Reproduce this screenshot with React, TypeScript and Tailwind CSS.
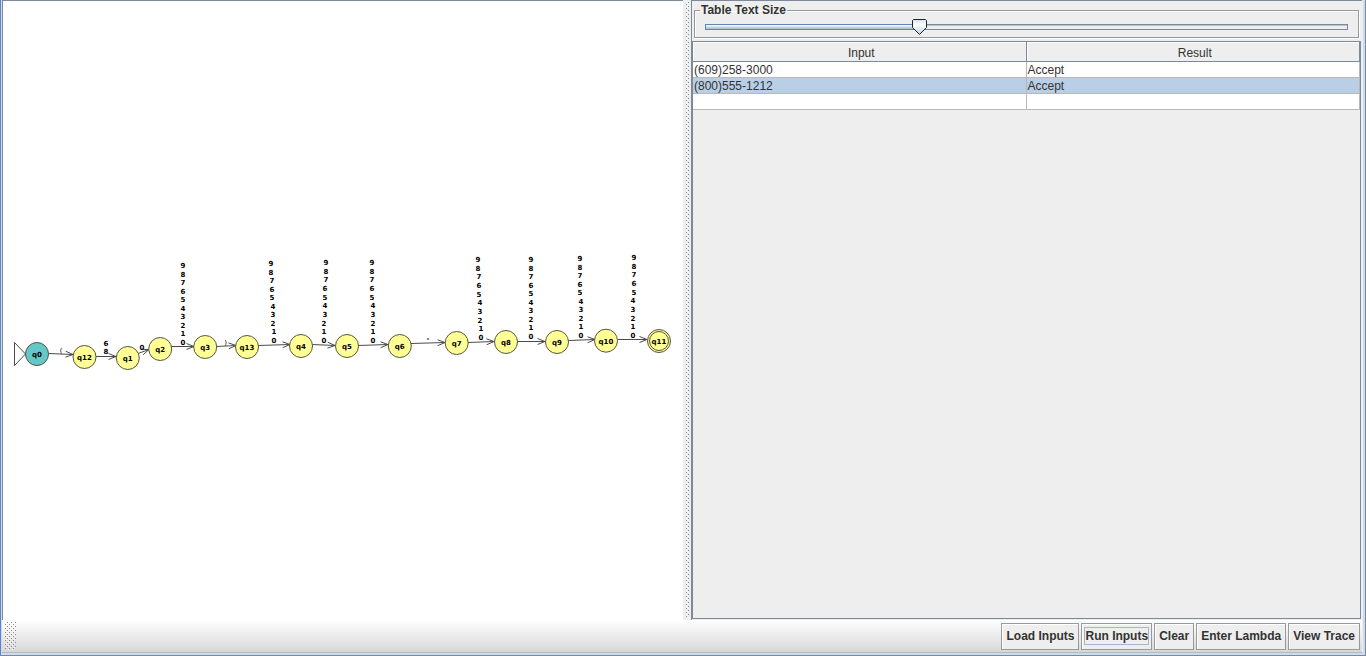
import { useState } from "react";

type State = { name: string; x: number; y: number; start?: boolean; final?: boolean };
type Edge = { x1: number; y1: number; x2: number; y2: number };
type Label = { text: string; x: number; y: number; light?: boolean };

const states: State[] = [
  { name: "q0", x: 35, y: 354, start: true },
  { name: "q12", x: 82.5, y: 357 },
  { name: "q1", x: 125.8, y: 358 },
  { name: "q2", x: 158.2, y: 349 },
  { name: "q3", x: 203.2, y: 347 },
  { name: "q13", x: 245, y: 347 },
  { name: "q4", x: 299, y: 346 },
  { name: "q5", x: 345, y: 346 },
  { name: "q6", x: 397.8, y: 346 },
  { name: "q7", x: 454.7, y: 343 },
  { name: "q8", x: 504, y: 342 },
  { name: "q9", x: 555, y: 342 },
  { name: "q10", x: 604, y: 340.7 },
  { name: "q11", x: 657, y: 341, final: true },
];

const edges: Edge[] = [
  { x1: 46, y1: 353.5, x2: 71, y2: 354.5 },
  { x1: 94, y1: 356.5, x2: 114, y2: 356.5 },
  { x1: 136, y1: 353.5, x2: 147, y2: 349.5 },
  { x1: 169, y1: 346.5, x2: 192, y2: 346.5 },
  { x1: 214, y1: 346.5, x2: 234, y2: 345.5 },
  { x1: 256, y1: 345.5, x2: 288, y2: 344.5 },
  { x1: 310, y1: 344.5, x2: 333, y2: 345.5 },
  { x1: 356, y1: 345.5, x2: 386, y2: 344.5 },
  { x1: 409, y1: 343.5, x2: 443, y2: 342.5 },
  { x1: 466, y1: 342.5, x2: 492, y2: 341.5 },
  { x1: 515, y1: 341.5, x2: 543, y2: 341.5 },
  { x1: 566, y1: 340.5, x2: 593, y2: 339.5 },
  { x1: 616, y1: 339.5, x2: 645, y2: 339.5 },
];

const labels: Label[] = [
  { text: "(", x: 59, y: 353, light: true },
  { text: "6", x: 104, y: 346 },
  { text: "8", x: 104, y: 354 },
  { text: "0", x: 140, y: 350 },
  { text: ")", x: 223.5, y: 344.5, light: true },
  { text: "-", x: 426, y: 341 },
];

const digitColumns = [
  { x1: 181, y1: 268, x2: 181, y2: 345 },
  { x1: 269, y1: 266, x2: 272, y2: 343 },
  { x1: 324, y1: 265, x2: 322, y2: 343 },
  { x1: 370, y1: 265, x2: 371, y2: 343 },
  { x1: 476, y1: 262, x2: 479, y2: 340 },
  { x1: 529, y1: 262, x2: 529, y2: 339 },
  { x1: 578, y1: 261, x2: 579, y2: 338 },
  { x1: 632, y1: 260, x2: 631, y2: 338 },
];

const digitLabels: Label[] = digitColumns.flatMap((c) =>
  Array.from({ length: 10 }, (_, i) => ({
    text: String(9 - i),
    x: Math.round(c.x1 + ((c.x2 - c.x1) * i) / 9),
    y: Math.round(c.y1 + ((c.y2 - c.y1) * i) / 9),
  })),
);

function arrowPath({ x1, y1, x2, y2 }: Edge) {
  const a = Math.atan2(y2 - y1, x2 - x1);
  const tip = (d: number) => `${x2 - 8 * Math.cos(a + d)} ${y2 - 8 * Math.sin(a + d)}`;
  return `M${x1} ${y1}L${x2} ${y2}M${tip(0.38)}L${x2} ${y2}L${tip(-0.38)}`;
}

function Automaton() {
  return (
    <svg width="680" height="380" viewBox="0 0 680 380" className="block shrink-0" role="img" aria-label="Automaton">
      <g fill="none" stroke="#4a4a4a" strokeWidth="1">
        {edges.map((e) => (
          <path key={e.x1} d={arrowPath(e)} />
        ))}
        <path d="M12.5 342.5L23.5 354L12.5 365.5Z" />
      </g>
      {states.map((s) => (
        <g key={s.name} stroke="#55553f" strokeWidth="1">
          <circle cx={s.x} cy={s.y} r="11.5" fill={s.start ? "#64c8c8" : "#ffff96"} />
          {s.final && <circle cx={s.x} cy={s.y} r="9.5" fill="none" />}
        </g>
      ))}
      <g textAnchor="middle" fill="#000" className="font-['DejaVu_Sans',sans-serif] text-[7px] font-bold">
        {states.map((s) => (
          <text key={s.name} x={s.x} y={Math.round(s.y) + 3}>
            {s.name}
          </text>
        ))}
        {[...labels, ...digitLabels].map((l, i) => (
          <text key={i} x={l.x} y={l.y} className={l.light ? "font-normal" : undefined}>
            {l.text}
          </text>
        ))}
      </g>
    </svg>
  );
}

function Dots({ id, color }: { id: string; color: string }) {
  return (
    <svg width="100%" height="100%" className="block" aria-hidden="true">
      <pattern id={id} width="4" height="4" patternUnits="userSpaceOnUse">
        <path d="M1 1h1v1h-1zM3 3h1v1h-1z" fill="#fff" />
        <path d="M0 2h1v1h-1zM2 0h1v1h-1z" fill={color} />
      </pattern>
      <rect width="100%" height="100%" fill={`url(#${id})`} />
    </svg>
  );
}

function TextSizeSlider() {
  const [value, setValue] = useState(33);
  return (
    <fieldset className="mx-[2px] mt-[2px] h-[35px] min-w-0 border border-[#999] px-[10px] shadow-[1px_1px_0_#fff,inset_1px_1px_0_#fff]">
      <legend className="-ml-[5px] px-[1px] leading-[14px] font-bold">
        <label htmlFor="text-size">Table Text Size</label>
      </legend>
      <div className="relative mt-[2px] h-4">
        <input
          id="text-size"
          type="range"
          min={0}
          max={100}
          value={value}
          onChange={(e) => setValue(Number(e.target.value))}
          className="block h-4 w-full appearance-none bg-transparent outline-none [&::-webkit-slider-runnable-track]:h-1.5 [&::-webkit-slider-runnable-track]:border [&::-webkit-slider-runnable-track]:border-[#7a8a99] [&::-webkit-slider-runnable-track]:shadow-[inset_0_1px_0_#b8c5d1] [&::-webkit-slider-thumb]:h-1 [&::-webkit-slider-thumb]:w-[15px] [&::-webkit-slider-thumb]:appearance-none [&::-webkit-slider-thumb]:bg-transparent"
        />
        <div
          className="pointer-events-none absolute top-[5px] left-0 h-1.5 border border-[#6382bf] bg-linear-to-b from-white to-[#a3b8cc]"
          style={{ width: `${value}%` }}
        />
        <div
          className="pointer-events-none absolute top-0 h-4 w-[15px]"
          style={{ left: `calc(${value}% - ${(value * 15) / 100}px)` }}
        >
          <svg width="15" height="16" viewBox="0 0 15 16" className="block" aria-hidden="true">
            <defs>
              <linearGradient id="thumb" x1="0" y1="0" x2="0" y2="1">
                <stop offset="0" stopColor="#cfdfee" />
                <stop offset="0.35" stopColor="#fff" />
                <stop offset="1" stopColor="#b8cfe5" />
              </linearGradient>
            </defs>
            <path d="M1.5 .5H13.5L14.5 1.5V8.5L7.5 15.5L.5 8.5V1.5Z" fill="url(#thumb)" stroke="#222" />
          </svg>
        </div>
      </div>
    </fieldset>
  );
}

const rows = [
  { input: "(609)258-3000", result: "Accept" },
  { input: "(800)555-1212", result: "Accept", selected: true },
  { input: "", result: "" },
];

function ResultsTable() {
  return (
    <table className="w-full table-fixed border-separate border-spacing-0 leading-[14px]">
      <thead>
        <tr>
          {["Input", "Result"].map((h) => (
            <th
              key={h}
              className="h-5 border-r border-b border-[#7a8a99] p-0 pt-[2px] pl-1 text-center font-normal shadow-[inset_1px_1px_0_#fff]"
            >
              {h}
            </th>
          ))}
        </tr>
      </thead>
      <tbody>
        {rows.map((r, i) => (
          <tr key={i} className={r.selected ? "bg-[#b8cfe5]" : "bg-white"}>
            <td className="h-4 border-r border-b border-[#b8b8b8] p-0 pt-px pl-px">{r.input}</td>
            <td className="h-4 border-r border-b border-[#b8b8b8] p-0 pt-px pl-px">{r.result}</td>
          </tr>
        ))}
      </tbody>
    </table>
  );
}

const actions = ["Load Inputs", "Run Inputs", "Clear", "Enter Lambda", "View Trace"];

export default function App() {
  return (
    <div className="flex min-h-screen flex-col border-b border-l border-r border-b-[#7a8a99] border-l-[#6382bf] border-r-[#7a8a99] bg-[#c8ddf2] font-['Liberation_Sans',Arial,sans-serif] text-[12px] text-[#333]">
      <div className="mr-[2px] mb-[2px] ml-px flex grow flex-col border-r border-b border-b-[#b8b8b8] border-r-[#eee] bg-[#eee]">
        <main className="grid grow grid-cols-[681fr_8px_671fr]">
          <section className="min-w-0 overflow-hidden border-t border-l border-[#7a8a99] bg-white">
            <div className="-mt-px -ml-px">
              <Automaton />
            </div>
          </section>
          <div className="overflow-hidden py-[2px] pr-px pl-[3px]">
            <Dots id="divider-dots" color="#7a8a99" />
          </div>
          <section className="flex min-w-0 flex-col border-t border-l border-[#7a8a99] pr-px pb-px">
            <TextSizeSlider />
            <div className="mt-[3px] grow border border-[#7a8a99]">
              <ResultsTable />
            </div>
          </section>
        </main>
        <footer className="flex h-8 items-center justify-between bg-linear-to-b from-white to-[#d8d8d8] pr-[2px] pl-[2px]">
          <div className="h-7 w-3 pl-px">
            <Dots id="grip-dots" color="#8a8a8a" />
          </div>
          <div className="flex gap-[2px]">
            {actions.map((a) => (
              <button
                key={a}
                type="button"
                className="h-[27px] border border-[#999] bg-[#eee] px-[2px] font-bold whitespace-nowrap shadow-[inset_1px_1px_0_#fff]"
              >
                <span
                  className={
                    a === "Run Inputs"
                      ? "block border border-[#a3b8cc] leading-[16px]"
                      : "block border border-transparent px-px leading-[16px]"
                  }
                >
                  {a}
                </span>
              </button>
            ))}
          </div>
        </footer>
      </div>
    </div>
  );
}
